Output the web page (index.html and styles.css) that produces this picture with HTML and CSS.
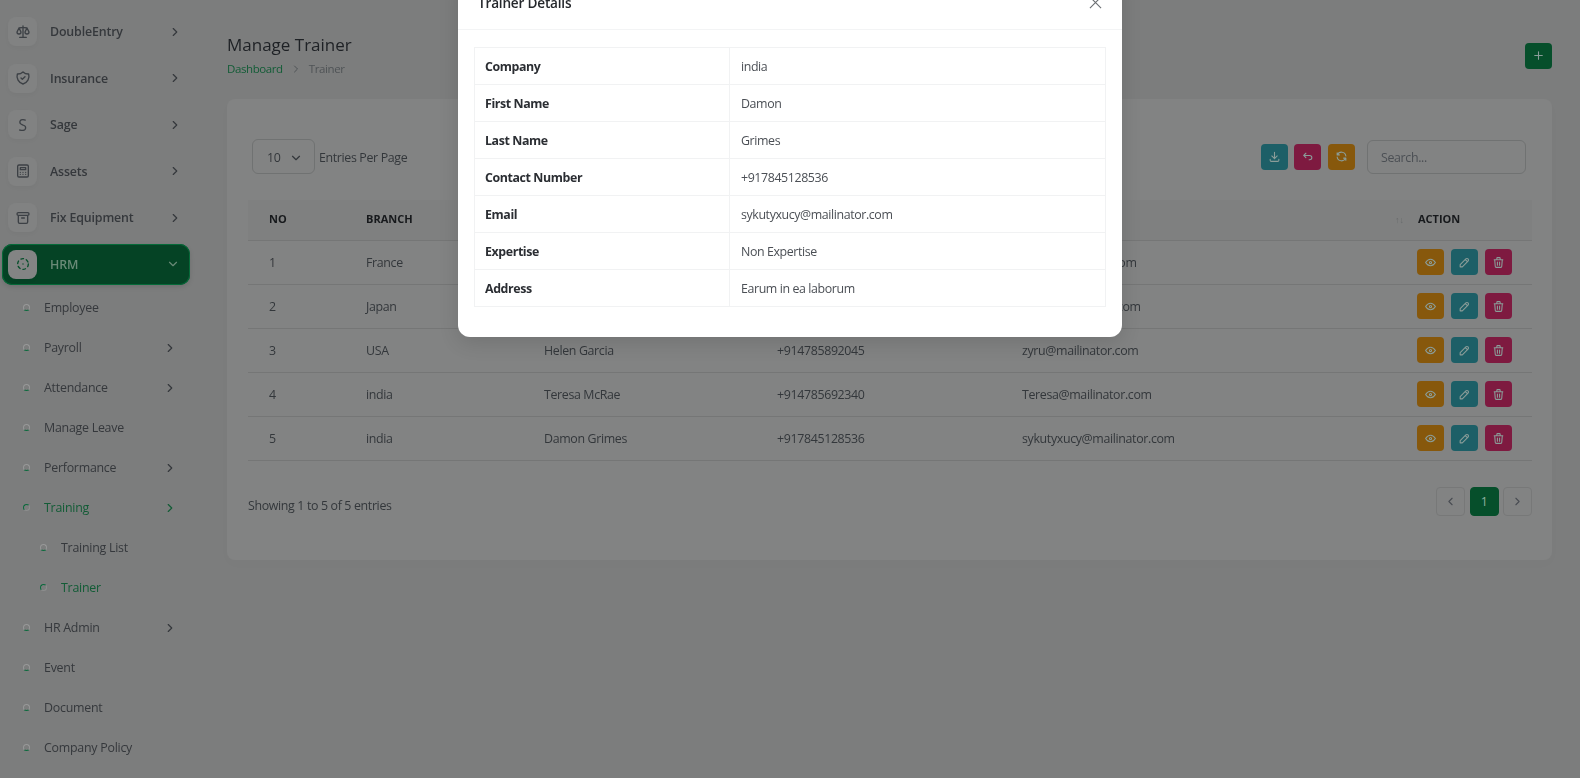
FILE: index.html
```html
<!DOCTYPE html>
<html lang="en">
<head>
    <meta charset="UTF-8">
    <meta name="viewport" content="width=device-width, initial-scale=1.0">
    <title>Manage Trainer</title>
    <link rel="stylesheet" href="styles.css">
</head>
<body>
    <svg class="sprite" aria-hidden="true">
        <symbol id="i-scale" viewBox="0 0 24 24"><path d="M7 20h10M6 6l6-1l6 1M12 3v17M9 12l-3-6l-3 6a3 3 0 0 0 6 0M21 12l-3-6l-3 6a3 3 0 0 0 6 0"/></symbol>
        <symbol id="i-shield" viewBox="0 0 24 24"><path d="M12 3a12 12 0 0 0 8.5 3a12 12 0 0 1-8.5 15a12 12 0 0 1-8.5-15a12 12 0 0 0 8.5-3M9 12l2 2l4-4"/></symbol>
        <symbol id="i-calc" viewBox="0 0 24 24"><path d="M6 3h12a2 2 0 0 1 2 2v14a2 2 0 0 1-2 2h-12a2 2 0 0 1-2-2v-14a2 2 0 0 1 2-2M8 7h8v3h-8zM8 14v.01M12 14v.01M16 14v.01M8 17v.01M12 17v.01M16 17v.01"/></symbol>
        <symbol id="i-archive" viewBox="0 0 24 24"><path d="M5 4h14a2 2 0 0 1 2 2a2 2 0 0 1-2 2h-14a2 2 0 0 1-2-2a2 2 0 0 1 2-2M5 8v10a2 2 0 0 0 2 2h10a2 2 0 0 0 2-2v-10M10 12h4"/></symbol>
        <symbol id="i-hrm" viewBox="0 0 24 24"><circle cx="12" cy="12" r="8" stroke-dasharray="4 4.38"/><path d="M12 12v.01"/></symbol>
        <symbol id="i-right" viewBox="0 0 24 24"><path d="M9 6l6 6l-6 6"/></symbol>
        <symbol id="i-left" viewBox="0 0 24 24"><path d="M15 6l-6 6l6 6"/></symbol>
        <symbol id="i-down" viewBox="0 0 24 24"><path d="M6 9l6 6l6-6"/></symbol>
        <symbol id="i-plus" viewBox="0 0 24 24"><path d="M12 5v14M5 12h14"/></symbol>
        <symbol id="i-download" viewBox="0 0 24 24"><path d="M4 17v2a2 2 0 0 0 2 2h12a2 2 0 0 0 2-2v-2M7 11l5 5l5-5M12 4v12"/></symbol>
        <symbol id="i-back" viewBox="0 0 24 24"><path d="M9 14l-4-4l4-4M5 10h11a4 4 0 1 1 0 8h-1"/></symbol>
        <symbol id="i-refresh" viewBox="0 0 24 24"><path d="M20 11a8.1 8.1 0 0 0-15.500-2m-.5-4v4h4M4 13a8.100 8.100 0 0 0 15.500 2m.5 4v-4h-4"/></symbol>
        <symbol id="i-eye" viewBox="0 0 24 24"><path d="M10 12a2 2 0 1 0 4 0a2 2 0 0 0-4 0M21 12c-2.400 4-5.400 6-9 6c-3.600 0-6.600-2-9-6c2.400-4 5.400-6 9-6c3.600 0 6.600 2 9 6"/></symbol>
        <symbol id="i-pencil" viewBox="0 0 24 24"><path d="M4 20h4l10.500-10.500a2.828 2.828 0 1 0-4-4l-10.500 10.500v4M13.500 6.500l4 4"/></symbol>
        <symbol id="i-trash" viewBox="0 0 24 24"><path d="M4 7h16M10 11v6M14 11v6M5 7l1 12a2 2 0 0 0 2 2h8a2 2 0 0 0 2-2l1-12M9 7v-3a1 1 0 0 1 1-1h4a1 1 0 0 1 1 1v3"/></symbol>
    </svg>

    <div class="app">
        <aside class="sidebar">
            <div class="nav-item">
                <span class="nav-icon"><svg class="icon"><use href="#i-scale"/></svg></span>
                <span class="nav-label">DoubleEntry</span>
                <svg class="chev"><use href="#i-right"/></svg>
            </div>
            <div class="nav-item">
                <span class="nav-icon"><svg class="icon"><use href="#i-shield"/></svg></span>
                <span class="nav-label">Insurance</span>
                <svg class="chev"><use href="#i-right"/></svg>
            </div>
            <div class="nav-item">
                <span class="nav-icon nav-letter">S</span>
                <span class="nav-label">Sage</span>
                <svg class="chev"><use href="#i-right"/></svg>
            </div>
            <div class="nav-item">
                <span class="nav-icon"><svg class="icon"><use href="#i-calc"/></svg></span>
                <span class="nav-label">Assets</span>
                <svg class="chev"><use href="#i-right"/></svg>
            </div>
            <div class="nav-item">
                <span class="nav-icon"><svg class="icon"><use href="#i-archive"/></svg></span>
                <span class="nav-label">Fix Equipment</span>
                <svg class="chev"><use href="#i-right"/></svg>
            </div>
            <div class="nav-item nav-active">
                <span class="nav-icon"><svg class="icon"><use href="#i-hrm"/></svg></span>
                <span class="nav-label">HRM</span>
                <svg class="chev"><use href="#i-down"/></svg>
            </div>

            <ul class="subnav">
                <li><i class="dot"></i>Employee</li>
                <li><i class="dot"></i>Payroll<svg class="chev"><use href="#i-right"/></svg></li>
                <li><i class="dot"></i>Attendance<svg class="chev"><use href="#i-right"/></svg></li>
                <li><i class="dot"></i>Manage Leave</li>
                <li><i class="dot"></i>Performance<svg class="chev"><use href="#i-right"/></svg></li>
                <li class="on"><i class="dot"></i>Training<svg class="chev"><use href="#i-right"/></svg></li>
                <li class="sub"><i class="dot"></i>Training List</li>
                <li class="sub on"><i class="dot"></i>Trainer</li>
                <li><i class="dot"></i>HR Admin<svg class="chev"><use href="#i-right"/></svg></li>
                <li><i class="dot"></i>Event</li>
                <li><i class="dot"></i>Document</li>
                <li><i class="dot"></i>Company Policy</li>
            </ul>
        </aside>

        <main class="main">
            <div class="page-head">
                <div>
                    <h1>Manage Trainer</h1>
                    <div class="crumbs">
                        <span class="crumb-link">Dashboard</span>
                        <svg class="crumb-sep"><use href="#i-right"/></svg>
                        <span>Trainer</span>
                    </div>
                </div>
                <span class="btn btn-green"><svg class="icon"><use href="#i-plus"/></svg></span>
            </div>

            <section class="card">
                <div class="toolbar">
                    <div class="per-page">
                        <span class="select">10<svg class="chev"><use href="#i-down"/></svg></span>
                        <span class="per-label">Entries Per Page</span>
                    </div>
                    <div class="tools">
                        <span class="btn btn-teal"><svg class="icon"><use href="#i-download"/></svg></span>
                        <span class="btn btn-pink"><svg class="icon"><use href="#i-back"/></svg></span>
                        <span class="btn btn-amber"><svg class="icon"><use href="#i-refresh"/></svg></span>
                        <span class="search">Search...</span>
                    </div>
                </div>

                <table class="data">
                    <colgroup>
                        <col class="c-no"><col class="c-branch"><col class="c-name"><col class="c-contact"><col class="c-email"><col class="c-action">
                    </colgroup>
                    <thead>
                        <tr>
                            <th>NO</th>
                            <th>BRANCH</th>
                            <th></th>
                            <th></th>
                            <th class="th-sort"><span class="sort">↑↓</span></th>
                            <th>ACTION</th>
                        </tr>
                    </thead>
                    <tbody>
                        <tr>
                            <td>1</td><td>France</td><td></td><td></td><td>kyle@mailinator.com</td>
                            <td><div class="actions">
                                <span class="btn btn-amber"><svg class="icon"><use href="#i-eye"/></svg></span>
                                <span class="btn btn-teal"><svg class="icon"><use href="#i-pencil"/></svg></span>
                                <span class="btn btn-pink"><svg class="icon"><use href="#i-trash"/></svg></span>
                            </div></td>
                        </tr>
                        <tr>
                            <td>2</td><td>Japan</td><td></td><td></td><td>kenji@mailinator.com</td>
                            <td><div class="actions">
                                <span class="btn btn-amber"><svg class="icon"><use href="#i-eye"/></svg></span>
                                <span class="btn btn-teal"><svg class="icon"><use href="#i-pencil"/></svg></span>
                                <span class="btn btn-pink"><svg class="icon"><use href="#i-trash"/></svg></span>
                            </div></td>
                        </tr>
                        <tr>
                            <td>3</td><td>USA</td><td>Helen Garcia</td><td>+914785892045</td><td>zyru@mailinator.com</td>
                            <td><div class="actions">
                                <span class="btn btn-amber"><svg class="icon"><use href="#i-eye"/></svg></span>
                                <span class="btn btn-teal"><svg class="icon"><use href="#i-pencil"/></svg></span>
                                <span class="btn btn-pink"><svg class="icon"><use href="#i-trash"/></svg></span>
                            </div></td>
                        </tr>
                        <tr>
                            <td>4</td><td>india</td><td>Teresa McRae</td><td>+914785692340</td><td>Teresa@mailinator.com</td>
                            <td><div class="actions">
                                <span class="btn btn-amber"><svg class="icon"><use href="#i-eye"/></svg></span>
                                <span class="btn btn-teal"><svg class="icon"><use href="#i-pencil"/></svg></span>
                                <span class="btn btn-pink"><svg class="icon"><use href="#i-trash"/></svg></span>
                            </div></td>
                        </tr>
                        <tr>
                            <td>5</td><td>india</td><td>Damon Grimes</td><td>+917845128536</td><td>sykutyxucy@mailinator.com</td>
                            <td><div class="actions">
                                <span class="btn btn-amber"><svg class="icon"><use href="#i-eye"/></svg></span>
                                <span class="btn btn-teal"><svg class="icon"><use href="#i-pencil"/></svg></span>
                                <span class="btn btn-pink"><svg class="icon"><use href="#i-trash"/></svg></span>
                            </div></td>
                        </tr>
                    </tbody>
                </table>

                <div class="table-foot">
                    <span class="showing">Showing 1 to 5 of 5 entries</span>
                    <div class="pager">
                        <span class="page"><svg class="icon"><use href="#i-left"/></svg></span>
                        <span class="page page-on">1</span>
                        <span class="page"><svg class="icon"><use href="#i-right"/></svg></span>
                    </div>
                </div>
            </section>
        </main>
    </div>

    <div class="modal">
        <div class="modal-head">
            <h2>Trainer Details</h2>
            <svg class="modal-close" viewBox="0 0 14 14"><path d="M1 1l12 12M13 1l-12 12"/></svg>
        </div>
        <div class="modal-body">
            <table class="details">
                <tr><th>Company</th><td>india</td></tr>
                <tr><th>First Name</th><td>Damon</td></tr>
                <tr><th>Last Name</th><td>Grimes</td></tr>
                <tr><th>Contact Number</th><td>+917845128536</td></tr>
                <tr><th>Email</th><td>sykutyxucy@mailinator.com</td></tr>
                <tr><th>Expertise</th><td>Non Expertise</td></tr>
                <tr><th>Address</th><td>Earum in ea laborum</td></tr>
            </table>
        </div>
    </div>
</body>
</html>
```

FILE: styles.css
```css
:root {
    --page: #7c7d7d;
    --panel: #828383;
    --line: #757676;
    --muted: #33373b;
    --green: #064f2b;
}

* {
    box-sizing: border-box;
}

html, body {
    height: 100%;
}

body {
    margin: 0;
    overflow: hidden;
    background-color: var(--page);
    color: var(--muted);
    font-family: 'Open Sans', sans-serif;
    font-size: 12.4px;
    letter-spacing: -0.35px;
}

.sprite {
    display: none;
}

.app {
    display: flex;
    height: 778px;
    overflow: hidden;
    filter: blur(0.4px);
}

svg use {
    fill: none;
    stroke: currentColor;
    stroke-width: 2;
    stroke-linecap: round;
    stroke-linejoin: round;
}

/* sidebar */
.sidebar {
    flex: 0 0 227px;
    padding: 17px 0 0 2px;
}

.nav-item {
    display: flex;
    align-items: center;
    width: 188px;
    height: 29px;
    margin-bottom: 17.5px;
    padding-left: 6px;
    font-size: 12.4px;
    font-weight: 600;
    letter-spacing: -0.15px;
    color: #35383c;
}

.nav-icon {
    display: flex;
    flex: 0 0 29px;
    height: 29px;
    align-items: center;
    justify-content: center;
    margin-right: 13px;
    border-radius: 8px;
    background-color: #818282;
    box-shadow: 0 2px 4px rgba(0, 0, 0, 0.03);
    color: #3c4045;
}

.nav-letter {
    font-size: 16px;
    font-weight: 400;
}

.nav-icon .icon {
    width: 16px;
    height: 16px;
}

.nav-label {
    flex: 1;
}

.chev {
    flex: 0 0 auto;
    width: 14px;
    height: 14px;
    margin-right: 8px;
}

.nav-active {
    height: 41px;
    margin-top: -6px;
    margin-bottom: 3px;
    border-radius: 10px;
    background-color: #054325;
    box-shadow: inset 0 0 0 1px #066a39, 0 2px 5px rgba(0, 0, 0, 0.12);
    color: #6a8a77;
}

.nav-active .nav-icon {
    color: var(--green);
    background-color: #838484;
}

.nav-active .chev {
    margin-right: 10px;
}

.subnav {
    margin: 0;
    padding: 0;
    list-style: none;
}

.subnav li {
    display: flex;
    align-items: center;
    height: 40px;
    padding-left: 21px;
    letter-spacing: -0.25px;
    color: #35383c;
}

.subnav .chev {
    margin-left: auto;
    margin-right: 50px;
}

.subnav .sub {
    padding-left: 38px;
}

.subnav .on {
    color: #125c36;
}

.dot {
    flex: 0 0 7px;
    width: 7px;
    height: 7px;
    margin-right: 14px;
    border: 1.5px solid #989999;
    border-bottom-color: #0a6a3c;
    border-radius: 50%;
}

.subnav .on .dot {
    border-color: #8d8e8e;
    border-top-color: #0a6a3c;
    border-left-color: #0a6a3c;
}

/* main */
.main {
    flex: 1;
    min-width: 0;
    padding: 33px 28px 0 0;
}

.page-head {
    display: flex;
    align-items: center;
    justify-content: space-between;
    margin-bottom: 21px;
}

h1 {
    margin: 0 0 2px;
    font-size: 17px;
    font-weight: 500;
    line-height: 24px;
    letter-spacing: 0;
    color: #1e2125;
}

.crumbs {
    display: flex;
    align-items: center;
    gap: 5px;
    font-size: 11.5px;
    line-height: 19px;
    letter-spacing: -0.4px;
    color: #4f5356;
}

.crumb-link {
    color: #125c36;
}

.crumb-sep {
    width: 12px;
    height: 12px;
    margin: 0 2px;
}

.btn {
    display: inline-flex;
    width: 27px;
    height: 26px;
    align-items: center;
    justify-content: center;
    border-radius: 4px;
    color: #8b9d99;
}

.btn .icon {
    width: 13px;
    height: 13px;
}

.btn-green {
    background-color: var(--green);
}

.btn-teal {
    background-color: #1d5f67;
}

.btn-pink {
    background-color: #7e1a40;
}

.btn-amber {
    background-color: #87580c;
}

.card {
    height: 461px;
    padding: 40px 20px 0 21px;
    border-radius: 8px;
    background-color: var(--panel);
    box-shadow: 0 4px 12px rgba(0, 0, 0, 0.015);
}

.toolbar {
    display: flex;
    align-items: center;
    justify-content: space-between;
    margin-bottom: 26px;
    padding: 0 6px 0 4px;
}

.per-page {
    display: flex;
    align-items: center;
    gap: 4px;
}

.per-label {
    padding-top: 2px;
}

.select {
    display: flex;
    width: 63px;
    height: 35px;
    align-items: center;
    justify-content: space-between;
    padding: 2px 3px 0 14px;
    border: 1px solid #707272;
    border-radius: 6px;
}

.tools {
    display: flex;
    align-items: center;
    gap: 6.5px;
}

.search {
    display: flex;
    width: 159px;
    height: 34px;
    align-items: center;
    margin-left: 6px;
    padding: 2px 0 0 13px;
    border: 1px solid #707272;
    border-radius: 6px;
    color: #4b4f54;
}

.data {
    width: 100%;
    border-collapse: collapse;
    table-layout: fixed;
}

.c-no { width: 97px; }
.c-branch { width: 178px; }
.c-name { width: 233px; }
.c-contact { width: 245px; }
.c-email { width: 406px; }

.data th {
    height: 40px;
    padding: 0 0 2px 21px;
    background-color: #7f8080;
    border-bottom: 1px solid var(--line);
    font-size: 11px;
    font-weight: 700;
    letter-spacing: 0;
    text-align: left;
    color: #17191c;
}

.data th:first-child,
.data td:first-child {
    padding-left: 21px;
}

.data th:last-child {
    padding-left: 11px;
}

.data td:last-child {
    padding-left: 10px;
}

.data .th-sort {
    position: relative;
}

.sort {
    position: absolute;
    right: 3px;
    top: 13px;
    font-size: 9px;
    font-weight: 400;
    color: #686a6b;
}

.data td {
    height: 44px;
    padding: 0 0 0 21px;
    border-bottom: 1px solid var(--line);
}

.actions {
    display: flex;
    gap: 7px;
}

.table-foot {
    display: flex;
    align-items: center;
    justify-content: space-between;
    margin-top: 26px;
}

.showing {
    padding-top: 9px;
}

.pager {
    display: flex;
    gap: 4.5px;
}

.page {
    display: flex;
    width: 29px;
    height: 29px;
    align-items: center;
    justify-content: center;
    border: 1px solid #777878;
    border-radius: 4px;
    color: #484c52;
}

.page .icon {
    width: 13px;
    height: 13px;
}

.page-on {
    border-color: var(--green);
    background-color: var(--green);
    color: #8fb3a0;
}

/* modal */
.modal {
    position: absolute;
    left: 458px;
    top: -26px;
    width: 664px;
    border-radius: 12px;
    background-color: #fff;
    box-shadow: 0 6px 20px rgba(0, 0, 0, 0.12);
}

.modal-head {
    display: flex;
    height: 56px;
    align-items: center;
    justify-content: space-between;
    padding: 1px 20px 0 20px;
    border-bottom: 1px solid #f3f4f5;
}

h2 {
    margin: 0;
    font-size: 13.6px;
    font-weight: 600;
    letter-spacing: -0.2px;
    color: #25282c;
}

.modal-close {
    width: 13px;
    height: 13px;
    fill: none;
    stroke: #6b6f73;
    stroke-width: 1.2;
}

.modal-body {
    padding: 17px 16px 30px;
}

.details {
    width: 100%;
    border-collapse: collapse;
    table-layout: fixed;
}

.details th,
.details td {
    height: 37px;
    padding: 0 10px;
    border: 1px solid #f1f2f3;
    text-align: left;
}

.details th {
    width: 255px;
    font-weight: 700;
    letter-spacing: -0.4px;
    color: #2b2e33;
}

.details td {
    padding-left: 11px;
    letter-spacing: -0.4px;
    color: #4b4f55;
}
```
